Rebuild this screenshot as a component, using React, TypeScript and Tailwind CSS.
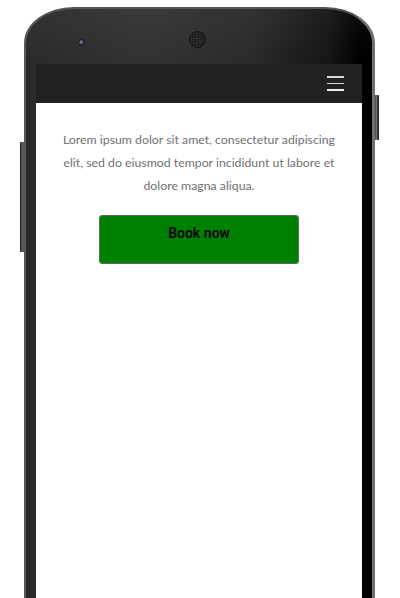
import React from "react";

export default function App() {
  return (
    <div className="relative w-[400px] h-[598px] overflow-hidden bg-white">
      {/* side buttons */}
      <div className="absolute left-[20px] top-[142px] w-[4px] h-[110px] rounded-l-[1px] bg-[linear-gradient(90deg,#3a3a3a,#6a6a6a_60%,#444)] border-l border-[#222]" />
      <div className="absolute left-[375px] top-[95px] w-[4px] h-[45px] rounded-r-[1px] bg-[linear-gradient(90deg,#444,#6a6a6a_50%,#333)] border-r border-[#222]" />

      {/* phone body */}
      <div className="relative ml-[24px] mt-[7px] w-[351px] h-[640px] flex flex-col pt-[55px] px-[10px] border-t-2 border-l-2 border-r-[3px] border-t-[#555] border-l-[#5a5a5a] border-r-[#707070] rounded-tl-[50px_36px] rounded-tr-[50px_36px] bg-[linear-gradient(90deg,#2a2a2a_0%,#323232_35%,#2a2a2a_65%,#141414_88%,#000_96%)]">
        {/* top bezel subtle shading */}
        <div className="absolute left-0 right-0 top-0 h-[55px] rounded-tl-[48px_34px] rounded-tr-[48px_34px] bg-[linear-gradient(180deg,rgba(255,255,255,0.04),rgba(0,0,0,0))]" />
        {/* camera */}
        <div className="absolute left-[52px] top-[30px] w-[7px] h-[7px] rounded-full bg-[radial-gradient(circle_at_40%_40%,#8a8aa8_0%,#4a4a66_45%,#1a1a22_100%)] border border-[#181818]" />
        {/* speaker */}
        <div className="absolute left-[163px] top-[22px] w-[17px] h-[17px] rounded-full border border-[#111] bg-[#1c1c1c] bg-[radial-gradient(circle,#4a4a4a_0.7px,transparent_0.9px)] bg-[length:2.6px_2.6px]" />

        {/* screen */}
        <div className="relative flex flex-col flex-1">
          <div className="h-[39px] bg-[#222222] flex items-center justify-end pr-[18px]">
            <div className="w-[17px] flex flex-col gap-[5px]">
              <div className="h-[1.5px] bg-[#d8d8d8]" />
              <div className="h-[1.5px] bg-[#d8d8d8]" />
              <div className="h-[1.5px] bg-[#eeeeee]" />
            </div>
          </div>
          <div className="flex-1 bg-white flex flex-col items-center pt-[25px] px-[18px]">
            <p className="text-center text-[12.3px] leading-[23px] text-[#707070] font-['Lato',sans-serif]">
              Lorem ipsum dolor sit amet, consectetur adipiscing elit, sed do eiusmod tempor incididunt ut labore et dolore magna aliqua.
            </p>
            <button className="mt-[18px] w-[200px] h-[49px] bg-[#008000] border border-[#5b6b5b] rounded-[3px] flex justify-center pt-[9px] text-[14px] leading-[16px] font-bold text-[#0a0a0a] font-['Roboto',sans-serif]">
              Book now
            </button>
          </div>
        </div>
      </div>
    </div>
  );
}
